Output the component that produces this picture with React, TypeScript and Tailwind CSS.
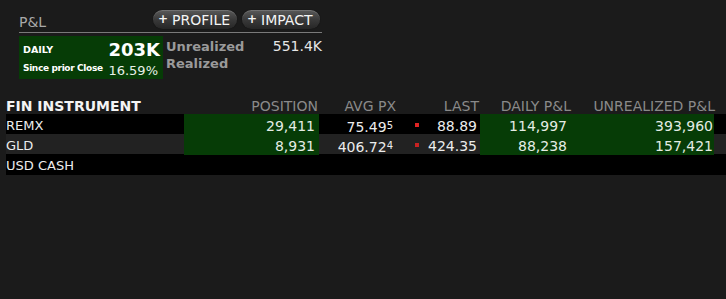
import React from "react";

function Pill({ w, label }: { w: string; label: string }) {
  return (
    <div
      className={`${w} h-[19px] rounded-full bg-gradient-to-b from-[#5a5a5a] via-[#3a3a3a] to-[#262626] shadow-[inset_0_1px_0_rgba(255,255,255,0.15),0_0_1px_rgba(0,0,0,0.8)] flex items-center pl-[5px] text-[#f4f4f4]`}
    >
      <span className="text-[12px] leading-[14px] font-bold mr-[4px] -mt-[2px]">+</span>
      <span className="text-[14px] leading-[16px]">{label}</span>
    </div>
  );
}

type Row = {
  name: string;
  pos: string;
  avg: string;
  sup: string;
  last: string;
  daily: string;
  unr: string;
};

const rows: Row[] = [
  { name: "REMX", pos: "29,411", avg: "75.49", sup: "5", last: "88.89", daily: "114,997", unr: "393,960" },
  { name: "GLD", pos: "8,931", avg: "406.72", sup: "4", last: "424.35", daily: "88,238", unr: "157,421" },
];

const grid = "grid grid-cols-[178px_135px_80px_81px_94px_140px_11px]";

export default function App() {
  return (
    <div className="w-[726px] h-[299px] bg-[#1b1b1b] overflow-hidden text-[#e8e8e8] font-['DejaVu_Sans',Verdana,sans-serif]">
      {/* P&L top block */}
      <div className="ml-[19px] w-[303px]">
        <div className="flex justify-between h-[33px] border-b border-[#7a7a7a]">
          <span className="mt-[14px] text-[14px] leading-[16px] text-[#a9a9a9]">P&amp;L</span>
          <div className="flex gap-[5px] mt-[10px] mr-[2px]">
            <Pill w="w-[84px]" label="PROFILE" />
            <Pill w="w-[78px]" label="IMPACT" />
          </div>
        </div>
        <div className="flex mt-[3px]">
          <div className="w-[144px] h-[43px] bg-[#063c06] flex flex-col pl-[4px] text-white">
            <div className="flex justify-between h-[22px]">
              <span className="mt-[8px] text-[9.5px] leading-[12px] font-bold">DAILY</span>
              <span className="mt-[4px] mr-[3px] text-[18px] leading-[20px] font-bold">203K</span>
            </div>
            <div className="flex justify-between">
              <span className="mt-[4px] text-[9px] leading-[12px] font-bold tracking-[-0.35px]">Since prior Close</span>
              <span className="mt-[5px] mr-[5px] text-[13px] leading-[15px] text-[#e8f0e8]">16.59%</span>
            </div>
          </div>
          <div className="ml-[3px] flex-1 pt-[2px]">
            <div className="flex justify-between">
              <span className="text-[13px] leading-[17px] font-bold text-[#9a9a9a]">Unrealized</span>
              <span className="text-[14px] leading-[17px] text-[#e6e6e6]">551.4K</span>
            </div>
            <div className="text-[13px] leading-[17px] font-bold text-[#9a9a9a]">Realized</div>
          </div>
        </div>
      </div>

      {/* Table */}
      <div className="ml-[6px] mt-[20px]">
        <div className={`${grid} h-[15px] text-[14px] leading-[15px] text-[#8a8a8a]`}>
          <div className="font-bold text-[#f4f4f4]">FIN INSTRUMENT</div>
          <div className="text-right pr-[1px]">POSITION</div>
          <div className="text-right pr-[3px]">AVG PX</div>
          <div className="text-right pr-[1px]">LAST</div>
          <div className="text-right pr-[3px]">DAILY P&amp;L</div>
          <div className="text-right -mr-[1px]">UNREALIZED P&amp;L</div>
          <div />
        </div>
        {rows.map((r, i) => (
          <div
            key={r.name}
            className={`${grid} h-[20px] ${i === 0 ? "bg-black" : "bg-[#222222]"} text-[14px] leading-[16px] text-[#ececec]`}
          >
            <div className="pt-[4px] text-[13px]">{r.name}</div>
            <div className="pt-[4px] bg-[#063c06] text-right pr-[4px] text-[#e4ece4]">{r.pos}</div>
            <div className="pt-[4px] text-right pr-[6px]">
              {r.avg}
              <span className="text-[10px] align-[3px]">{r.sup}</span>
            </div>
            <div className="pt-[4px] flex justify-between pr-[3px]">
              <span className={`ml-[16px] mt-[5px] w-[4px] h-[4px] ${i === 0 ? "bg-[#e02424]" : "bg-[#c82222]"}`} />
              <span>{r.last}</span>
            </div>
            <div className="pt-[4px] bg-[#063c06] text-right pr-[7px] text-[#e4ece4]">{r.daily}</div>
            <div className="pt-[4px] bg-[#063c06] text-right pr-[1px] text-[#e4ece4]">{r.unr}</div>
            <div />
          </div>
        ))}
        <div className="h-[21px] bg-black pt-[4px] text-[13px] leading-[16px] text-[#ececec] w-[720px]">USD CASH</div>
      </div>
    </div>
  );
}
